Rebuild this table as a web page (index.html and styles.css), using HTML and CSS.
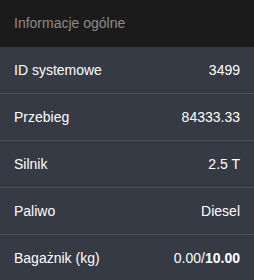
FILE: index.html
```html
<!DOCTYPE html>
<html>
<head>
    <meta charset="utf-8">
    <title>Informacje ogólne</title>
    <link rel="stylesheet" href="styles.css">
</head>
<body>

<div class="panel">
    <div class="panel-head">Informacje ogólne</div>
    <ul class="info-list">
        <li class="info-row">
            <span class="info-label">ID systemowe</span>
            <span class="info-value">3499</span>
        </li>
        <li class="info-row">
            <span class="info-label">Przebieg</span>
            <span class="info-value">84333.33</span>
        </li>
        <li class="info-row">
            <span class="info-label">Silnik</span>
            <span class="info-value">2.5 T</span>
        </li>
        <li class="info-row">
            <span class="info-label">Paliwo</span>
            <span class="info-value">Diesel</span>
        </li>
        <li class="info-row">
            <span class="info-label">Bagażnik (kg)</span>
            <span class="info-value">0.00/<b>10.00</b></span>
        </li>
    </ul>
</div>

</body>
</html>
```

FILE: styles.css
```css
*{
    padding: 0;
    margin: 0;
    box-sizing: border-box;
}

body{
    background-color: #353a45;
    font-family: "Liberation Sans", Arial, sans-serif;
    font-size: 14px;
}

.panel-head{
    height: 47px;
    line-height: 47px;
    padding: 0 14px;
    background-color: #1b1b1b;
    color: #8c8c8c;
}

.info-list{
    list-style: none;
}

.info-row{
    display: flex;
    justify-content: space-between;
    align-items: center;
    height: 47px;
    padding: 0 14px;
    background-color: #353a45;
    color: #fff;
    border-bottom: 1px solid #4b505b;
}
```
